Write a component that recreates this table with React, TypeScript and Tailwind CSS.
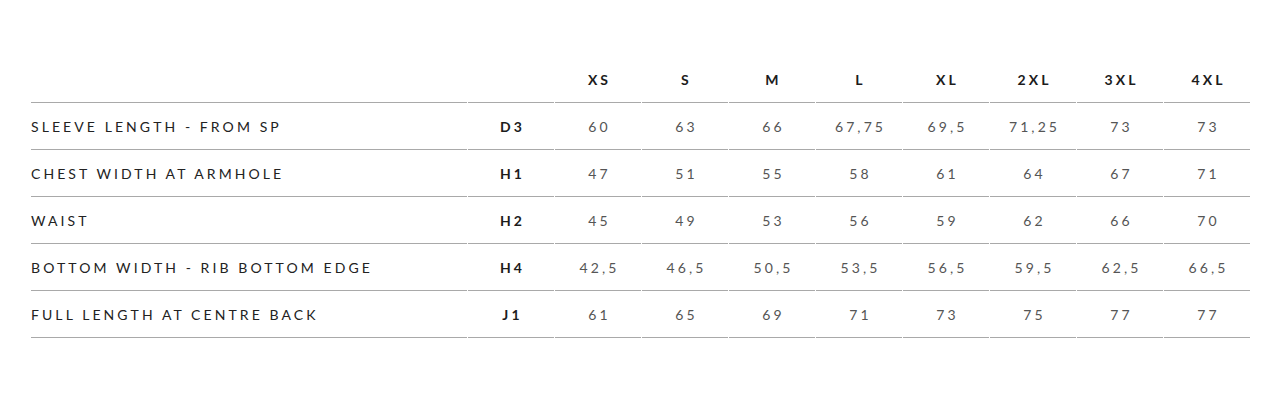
const SIZES = ['XS', 'S', 'M', 'L', 'XL', '2XL', '3XL', '4XL'];

const ROWS: { label: string; code: string; values: string[] }[] = [
  { label: 'Sleeve length - from SP', code: 'D3', values: ['60', '63', '66', '67,75', '69,5', '71,25', '73', '73'] },
  { label: 'Chest width at armhole', code: 'H1', values: ['47', '51', '55', '58', '61', '64', '67', '71'] },
  { label: 'Waist', code: 'H2', values: ['45', '49', '53', '56', '59', '62', '66', '70'] },
  { label: 'Bottom width - rib bottom edge', code: 'H4', values: ['42,5', '46,5', '50,5', '53,5', '56,5', '59,5', '62,5', '66,5'] },
  { label: 'Full length at centre back', code: 'J1', values: ['61', '65', '69', '71', '73', '75', '77', '77'] },
];

export default function App() {
  return (
    <div className="min-h-[408px] bg-white pt-[56px] pl-[30px] font-['Lato','Liberation_Sans',sans-serif]">
      <table className="w-[1221px] table-fixed border-separate border-spacing-x-px border-spacing-y-0 text-[14px] tracking-[0.22em]">
        <colgroup>
          <col className="w-[436px]" />
          <col className="w-[86px]" />
          {SIZES.map((s) => (
            <col key={s} className="w-[86px]" />
          ))}
        </colgroup>
        <thead>
          <tr className="h-[47px]">
            <th className="border-b border-[#a9a9a9]" />
            <th className="border-b border-[#a9a9a9]" />
            {SIZES.map((s) => (
              <th key={s} className="border-b border-[#a9a9a9] pl-[3px] text-center font-bold text-[#1c1c1c]">
                {s}
              </th>
            ))}
          </tr>
        </thead>
        <tbody>
          {ROWS.map((row) => (
            <tr key={row.code} className="h-[47px]">
              <td className="border-b border-[#a9a9a9] text-left uppercase text-[#222]">{row.label}</td>
              <td className="border-b border-[#a9a9a9] pl-[3px] text-center font-bold text-[#1c1c1c]">{row.code}</td>
              {row.values.map((v, i) => (
                <td key={i} className="border-b border-[#a9a9a9] pl-[3px] text-center text-[#555]">
                  {v}
                </td>
              ))}
            </tr>
          ))}
        </tbody>
      </table>
    </div>
  );
}
